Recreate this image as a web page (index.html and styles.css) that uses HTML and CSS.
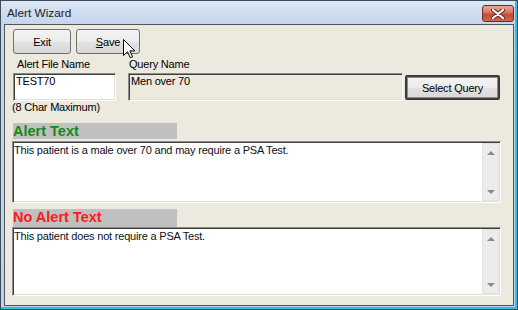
FILE: index.html
```html
<!DOCTYPE html>
<html lang="en">
<head>
    <meta charset="UTF-8">
    <title>Alert Wizard</title>
    <link rel="stylesheet" href="styles.css">
</head>
<body>
    <div class="window">
        <div class="titlebar">
            <span class="title">Alert Wizard</span>
            <span class="close">
                <svg width="14" height="10" viewBox="0 0 14 10">
                    <path d="M2 1 L12 9 M12 1 L2 9" stroke="#5a2a22" stroke-width="4" stroke-linecap="round"/>
                    <path d="M2 1 L12 9 M12 1 L2 9" stroke="#fff" stroke-width="2.2" stroke-linecap="round"/>
                </svg>
            </span>
        </div>

        <div class="client">
            <div class="toolbar">
                <button class="btn btn-exit">Exit</button>
                <button class="btn btn-save"><u>S</u>ave</button>
            </div>

            <div class="labels">
                <span class="label label-file">Alert File Name</span>
                <span class="label label-query">Query Name</span>
            </div>

            <div class="inputs">
                <div class="field field-file">TEST70</div>
                <div class="field field-query">Men over 70</div>
                <button class="btn btn-select">Select Query</button>
            </div>
            <div class="hint">(8 Char Maximum)</div>

            <div class="section-head head-alert">Alert Text</div>
            <div class="memo memo-alert">
                <div class="memo-text">This patient is a male over 70 and may require a PSA Test.</div>
                <div class="scrollbar">
                    <span class="arrow arrow-up"></span>
                    <span class="arrow arrow-down"></span>
                </div>
            </div>

            <div class="section-head head-noalert">No Alert Text</div>
            <div class="memo memo-noalert">
                <div class="memo-text">This patient does not require a PSA Test.</div>
                <div class="scrollbar">
                    <span class="arrow arrow-up"></span>
                    <span class="arrow arrow-down"></span>
                </div>
            </div>
        </div>

        <!-- mouse pointer over the Save button -->
        <svg class="cursor" width="13" height="20" viewBox="0 0 13 20">
            <path d="M0.5 0.5 L0.5 16.5 L4.5 12.8 L7.3 18.8 L9.6 17.8 L6.9 11.9 L11.8 11.9 Z" fill="#fff" stroke="#000" stroke-width="1"/>
        </svg>
    </div>
</body>
</html>
```

FILE: styles.css
```css
body {
    margin: 0;
    padding: 0;
    font-family: "Liberation Sans", Arial, sans-serif;
    font-size: 11px;
    color: #000;
}

.window {
    position: relative;
    width: 518px;
    height: 310px;
    box-sizing: border-box;
    border: 1px solid #3f4c5a;
    padding: 0 3px 3px 3px;
    display: flex;
    flex-direction: column;
    background: linear-gradient(#dbe7f4, #c3d6ec 23px, #bed3ea);
    box-shadow: inset -1px -1px 0 #2dbfe3, inset -2px -2px 0 #2dbfe3;
}

.titlebar {
    height: 23px;
    display: flex;
    align-items: flex-start;
    justify-content: space-between;
}

.title {
    padding: 5px 0 0 3px;
    font-size: 11.8px;
    line-height: 15px;
    color: #1c1c1c;
}

.close {
    margin-top: 4px;
    width: 32px;
    height: 17px;
    box-sizing: border-box;
    border: 1px solid #6b2b22;
    border-radius: 3px;
    background: linear-gradient(#e9a898, #d6735f 45%, #c24a33 55%, #cf6a50);
    display: flex;
    align-items: center;
    justify-content: center;
}

.close svg {
    display: block;
}

.client {
    flex: 1;
    border: 1px solid #4e5660;
    background-color: #ece9de;
    padding: 4px 0 0 7px;
    letter-spacing: -0.2px;
}

.toolbar {
    display: flex;
    gap: 5px;
    margin-left: 1px;
}

.btn {
    font-family: "Liberation Sans", Arial, sans-serif;
    font-size: 11px;
    letter-spacing: -0.2px;
    color: #000;
    height: 25px;
    padding: 0;
    border: 1px solid #707070;
    border-radius: 3px;
    background: linear-gradient(#f3f3f3, #ececec 50%, #e2e2e2 51%, #d8d8d8);
}

.btn-exit {
    width: 58px;
}

.btn-save {
    width: 64px;
}

.labels {
    display: flex;
    margin-top: 4px;
    line-height: 13px;
}

.label-file {
    margin-left: 5px;
    width: 112px;
}

.inputs {
    display: flex;
    align-items: flex-start;
    margin-top: 2px;
    margin-left: 1px;
}

.field {
    height: 28px;
    box-sizing: border-box;
    border-top: 1px solid #8c8c8c;
    border-left: 1px solid #8c8c8c;
    border-right: 1px solid #ffffff;
    border-bottom: 1px solid #ffffff;
    box-shadow: inset 1px 1px 0 #3f3f3f, inset -1px -1px 0 #e4e2d8;
    padding: 1px 0 0 2px;
    line-height: 13px;
}

.field-file {
    width: 103px;
    background-color: #fff;
}

.field-query {
    width: 275px;
    margin-left: 12px;
    background-color: #ece9de;
}

.btn-select {
    width: 95px;
    margin-left: 2px;
    margin-top: 2px;
    border: 2px solid #3c3c3c;
    border-radius: 2px;
    box-shadow: inset 0 0 0 1px #8a8a8a;
}

.hint {
    line-height: 13px;
    margin-left: 0;
}

.section-head {
    width: 164px;
    margin-left: 1px;
    background-color: #c0c0c0;
    font-weight: bold;
    font-size: 14.5px;
    letter-spacing: 0;
    white-space: nowrap;
}

.head-alert {
    margin-top: 9px;
    height: 16px;
    line-height: 16px;
    color: #168a16;
}

.head-noalert {
    margin-top: 6px;
    height: 18px;
    line-height: 17px;
    color: #ff1a1a;
}

.memo {
    width: 489px;
    box-sizing: border-box;
    display: flex;
    background-color: #fff;
    border-top: 1px solid #8c8c8c;
    border-left: 1px solid #8c8c8c;
    border-right: 1px solid #ffffff;
    border-bottom: 1px solid #ffffff;
    box-shadow: inset 1px 1px 0 #3f3f3f, inset -1px -1px 0 #e4e2d8;
}

.memo-alert {
    margin-top: 2px;
    height: 62px;
}

.memo-noalert {
    height: 69px;
}

.memo-text {
    flex: 1;
    padding: 2px 0 0 1px;
    line-height: 13px;
    color: #10101c;
}

.scrollbar {
    width: 17px;
    margin: 1px 1px 1px 0;
    box-sizing: border-box;
    border: 1px solid #e2e2e2;
    background-color: #ececec;
    display: flex;
    flex-direction: column;
    justify-content: space-between;
    align-items: center;
    padding: 7px 0 6px 0;
}

.arrow {
    width: 0;
    height: 0;
    border-left: 4px solid transparent;
    border-right: 4px solid transparent;
}

.arrow-up {
    border-bottom: 4px solid #8a8a8a;
}

.arrow-down {
    border-top: 4px solid #8a8a8a;
}

.cursor {
    position: absolute;
    left: 122px;
    top: 38px;
}
```
